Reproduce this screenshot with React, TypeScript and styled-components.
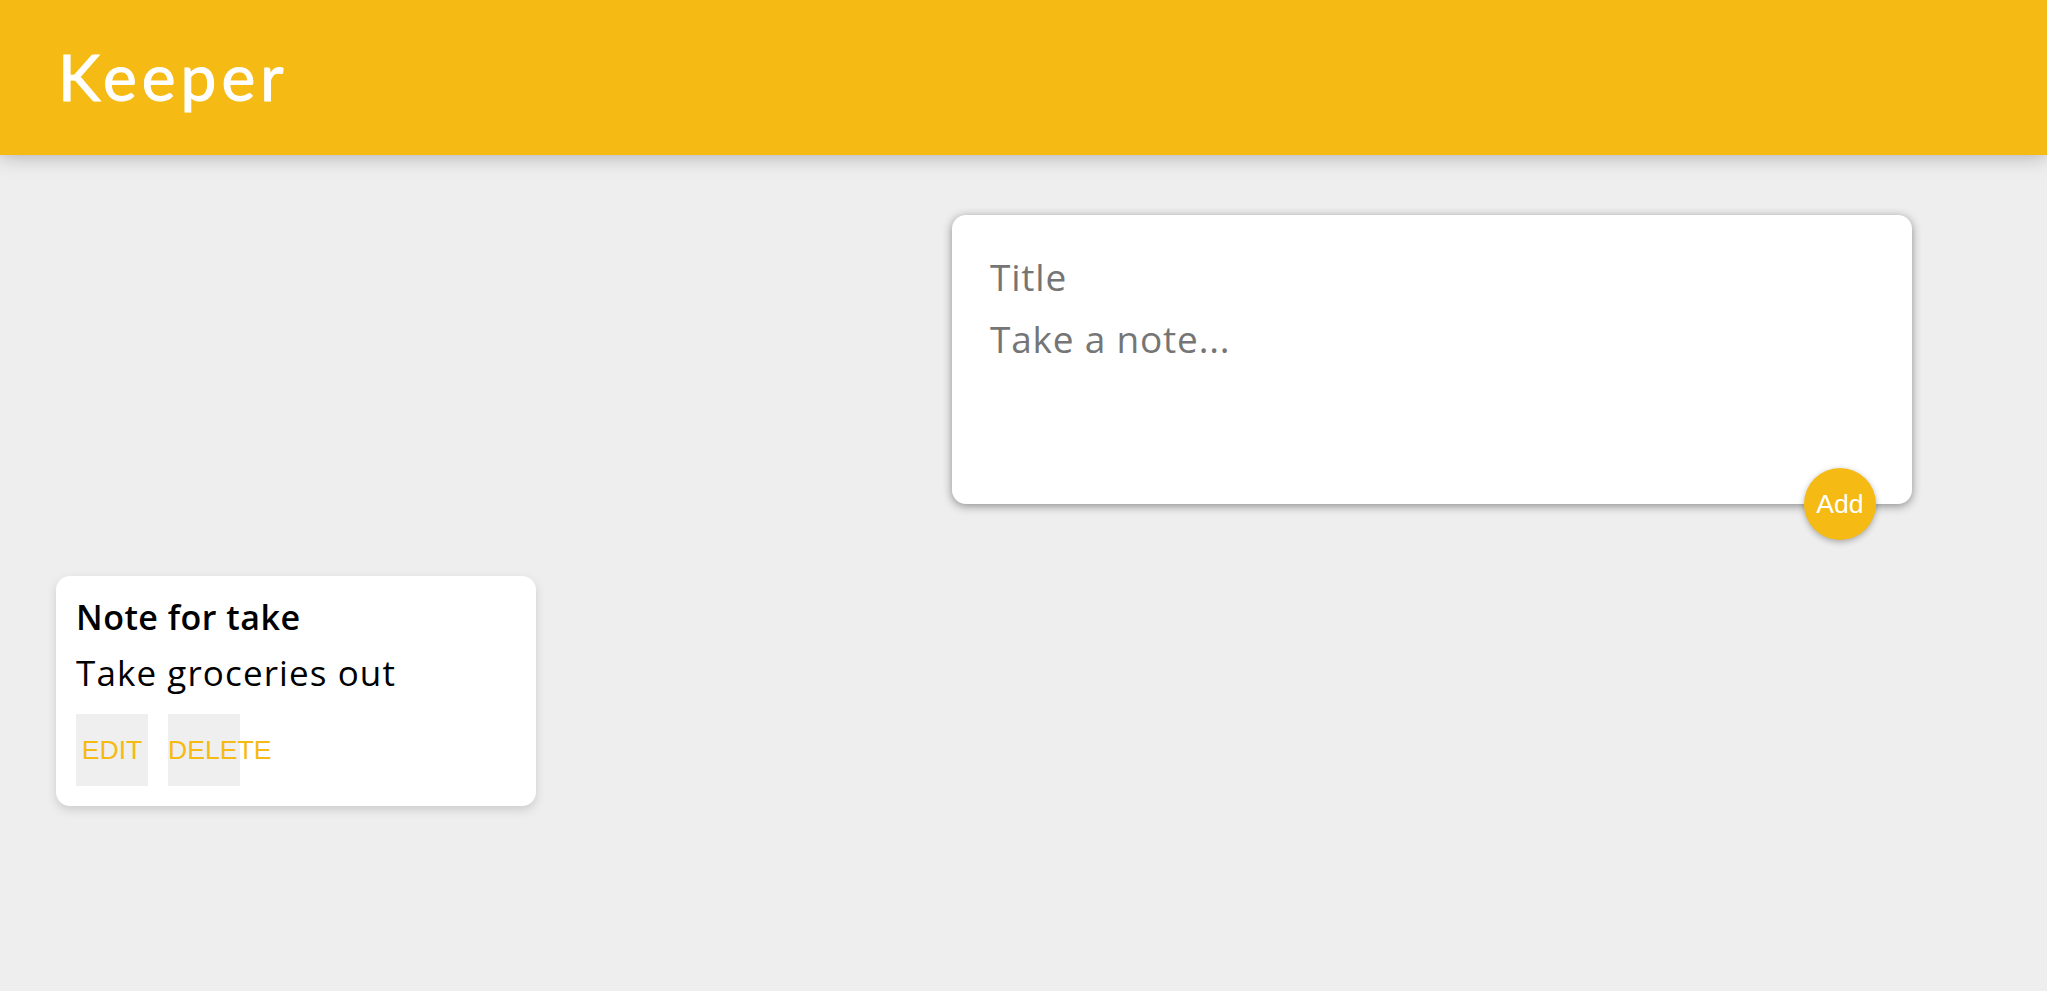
import React from "react";
import styled, { createGlobalStyle } from "styled-components";

const Global = createGlobalStyle`
  * { margin: 0; padding: 0; box-sizing: border-box; }
  html, body { background: #eeeeee; }
  body {
    font-family: "Open Sans", "Liberation Sans", sans-serif;
    min-height: 991px;
  }
`;

const Header = styled.header`
  background: #f5ba13;
  height: 155px;
  padding: 0 58px;
  display: flex;
  align-items: center;
  box-shadow: 0 0 20px 0 rgba(0, 0, 0, 0.3);
  position: relative;
`;

const Logo = styled.h1`
  font-family: "Lato", "Noto Sans", sans-serif;
  font-weight: 400;
  font-size: 64px;
  line-height: 90px;
  color: #fff;
  margin-top: -2px;
  letter-spacing: 5px;
  -webkit-text-stroke: 1px #fff;
`;

const Form = styled.form`
  position: relative;
  width: 960px;
  height: 289px;
  margin: 60px 0 40px 952px;
  background: #fff;
  padding: 30px;
  border-radius: 14px;
  box-shadow: 0 2px 10px rgb(138, 137, 137);
`;

const Field = styled.input`
  display: block;
  width: 100%;
  height: 63px;
  border: none;
  outline: none;
  padding: 8px;
  font-family: "Open Sans", sans-serif;
  font-size: 37px;
  letter-spacing: 0.8px;
  color: #333;
  &::placeholder { color: #757575; }
`;

const Area = styled.textarea`
  display: block;
  width: 100%;
  height: 166px;
  border: none;
  outline: none;
  resize: none;
  padding: 8px;
  font-family: "Open Sans", sans-serif;
  font-size: 37px;
  letter-spacing: 0.8px;
  line-height: 46px;
  color: #333;
  &::placeholder { color: #757575; }
`;

const AddButton = styled.button`
  position: absolute;
  right: 36px;
  bottom: -36px;
  width: 72px;
  height: 72px;
  border: none;
  border-radius: 50%;
  background: #f5ba13;
  color: #fff;
  font-family: "Liberation Sans", Arial, sans-serif;
  font-size: 26.6px;
  box-shadow: 0 2px 6px rgba(0, 0, 0, 0.3);
  cursor: pointer;
`;

const Notes = styled.div`
  display: flex;
  flex-wrap: wrap;
  gap: 32px;
  padding: 32px 0 0 56px;
`;

const Card = styled.div`
  width: 480px;
  background: #fff;
  border-radius: 14px;
  padding: 20px;
  box-shadow: 0 4px 10px #ccc;
`;

const CardTitle = styled.h1`
  font-family: "Open Sans", sans-serif;
  font-weight: 600;
  font-size: 34px;
  line-height: 43px;
  letter-spacing: 0.5px;
  color: #000;
  margin-bottom: 12px;
`;

const CardText = styled.p`
  font-family: "Open Sans", sans-serif;
  font-weight: 400;
  font-size: 35px;
  line-height: 43px;
  letter-spacing: 1.1px;
  color: #000;
  margin-bottom: 20px;
`;

const Actions = styled.div`
  display: flex;
  gap: 20px;
`;

const ActionButton = styled.button`
  width: 72px;
  height: 72px;
  border: none;
  background: #efefef;
  color: #f5ba13;
  font-family: "Liberation Sans", Arial, sans-serif;
  font-size: 26.6px;
  white-space: nowrap;
  cursor: pointer;
`;

export default function App() {
  return (
    <>
      <Global />
      <Header>
        <Logo>Keeper</Logo>
      </Header>
      <Form onSubmit={(e) => e.preventDefault()}>
        <Field name="title" placeholder="Title" />
        <Area name="content" placeholder="Take a note..." rows={3} />
        <AddButton type="submit">Add</AddButton>
      </Form>
      <Notes>
        <Card>
          <CardTitle>Note for take</CardTitle>
          <CardText>Take groceries out</CardText>
          <Actions>
            <ActionButton>EDIT</ActionButton>
            <ActionButton>DELETE</ActionButton>
          </Actions>
        </Card>
      </Notes>
    </>
  );
}
